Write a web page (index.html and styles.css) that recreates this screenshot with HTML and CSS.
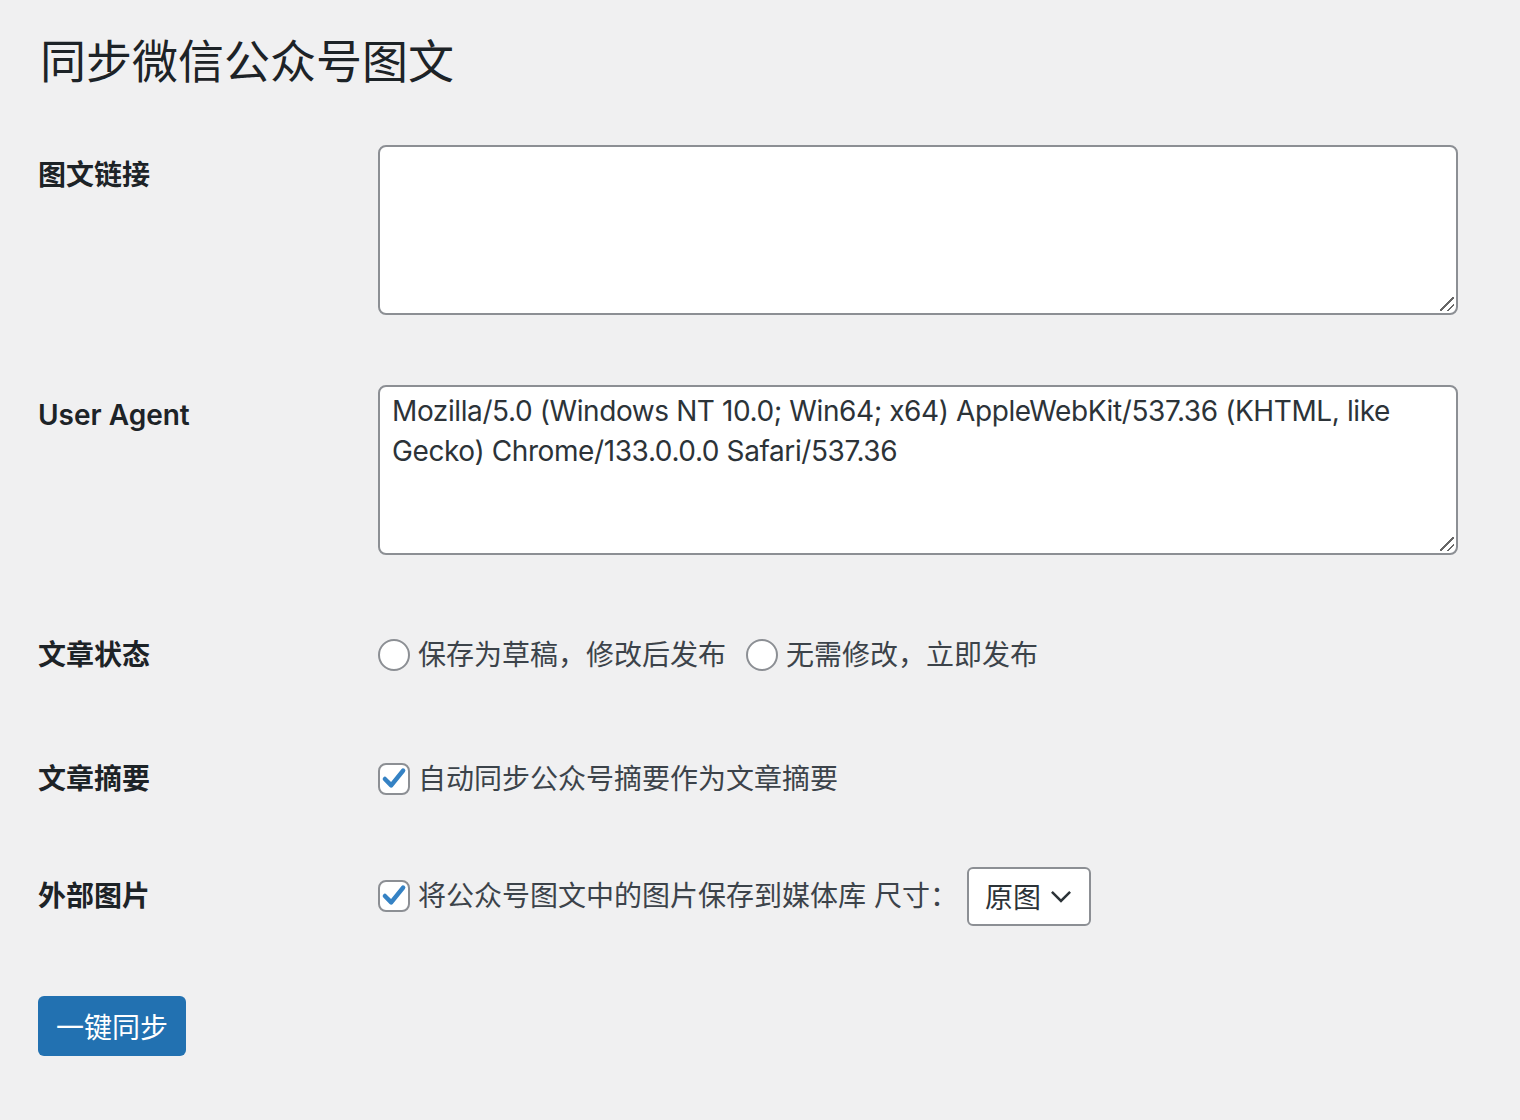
FILE: index.html
```html
<!DOCTYPE html>
<html lang="zh-CN">
<head>
    <meta charset="UTF-8">
    <meta name="viewport" content="width=device-width, initial-scale=1.0">
    <title>同步微信公众号图文</title>
    <link rel="stylesheet" href="styles.css">
</head>
<body>
    <div class="wrap">
        <h1>同步微信公众号图文</h1>

        <form class="sync-form">
            <div class="form-row">
                <div class="form-label">图文链接</div>
                <div class="form-field">
                    <div class="textarea-box">
                        <textarea class="large-text" rows="4"></textarea>
                    </div>
                </div>
            </div>

            <div class="form-row">
                <div class="form-label">User Agent</div>
                <div class="form-field">
                    <div class="textarea-box">
                        <textarea class="large-text" rows="4">Mozilla/5.0 (Windows NT 10.0; Win64; x64) AppleWebKit/537.36 (KHTML, like Gecko) Chrome/133.0.0.0 Safari/537.36</textarea>
                    </div>
                </div>
            </div>

            <div class="form-row row-status">
                <div class="form-label">文章状态</div>
                <div class="form-field inline-field">
                    <label class="choice"><span class="radio"></span>保存为草稿，修改后发布</label>
                    <label class="choice"><span class="radio"></span>无需修改，立即发布</label>
                </div>
            </div>

            <div class="form-row row-check">
                <div class="form-label">文章摘要</div>
                <div class="form-field inline-field">
                    <label class="choice">
                        <span class="checkbox">
                            <svg viewBox="0 0 20 20" width="30" height="30"><path d="M3.5 10 L8 14.5 L16.5 4" fill="none" stroke="#3582c4" stroke-width="3.2" stroke-linecap="round" stroke-linejoin="round"/></svg>
                        </span>自动同步公众号摘要作为文章摘要
                    </label>
                </div>
            </div>

            <div class="form-row row-image">
                <div class="form-label">外部图片</div>
                <div class="form-field inline-field">
                    <label class="choice">
                        <span class="checkbox">
                            <svg viewBox="0 0 20 20" width="30" height="30"><path d="M3.5 10 L8 14.5 L16.5 4" fill="none" stroke="#3582c4" stroke-width="3.2" stroke-linecap="round" stroke-linejoin="round"/></svg>
                        </span>将公众号图文中的图片保存到媒体库 尺寸：
                    </label>
                    <div class="select-box">
                        原图
                        <svg viewBox="0 0 20 20" width="28" height="28"><path d="M3.5 7 L10 13.5 L16.5 7" fill="none" stroke="#2c3338" stroke-width="1.8"/></svg>
                    </div>
                </div>
            </div>

            <div class="submit">
                <button type="button" class="button-primary">一键同步</button>
            </div>
        </form>
    </div>
</body>
</html>
```

FILE: styles.css
```css
body {
    font-family: Inter, "Noto Sans CJK SC", sans-serif;
    background-color: #F0F0F1;
    color: #1D2327;
    margin: 0;
    padding: 0;
}

.wrap {
    padding: 30px 40px 0 38px;
}

h1 {
    font-size: 46px;
    font-weight: 400;
    line-height: 62px;
    margin: 0 0 0 2px;
    padding: 0;
}

/* Form rows */
.sync-form {
    margin-top: 23px;
}

.form-row {
    display: grid;
    grid-template-columns: 340px 1fr;
}

.form-label {
    font-size: 28px;
    font-weight: 600;
    line-height: 40px;
    padding-top: 40px;
}

.form-field {
    padding: 30px 0;
    font-size: 28px;
    color: #3C434A;
}

.textarea-box {
    position: relative;
    width: 1080px;
    margin-bottom: 10px;
}

.large-text {
    display: block;
    box-sizing: border-box;
    width: 100%;
    height: 170px;
    padding: 4px 12px;
    border: 2px solid #8C8F94;
    border-radius: 8px;
    background-color: white;
    font-family: Inter, "Noto Sans CJK SC", sans-serif;
    font-size: 28px;
    line-height: 40px;
    color: #2C3338;
    letter-spacing: -0.4px;
    resize: none;
    outline: none;
}

/* resize grip drawn at 2x */
.textarea-box::after {
    content: "";
    position: absolute;
    right: 4px;
    bottom: 4px;
    width: 14px;
    height: 14px;
    background: linear-gradient(135deg, transparent 46%, #666 46%, #666 54%, transparent 54%, transparent 72%, #666 72%, #666 82%, transparent 82%);
}

.inline-field {
    display: flex;
    align-items: center;
}

.row-status .form-field {
    padding-top: 28px;
    min-height: 63px;
    box-sizing: content-box;
}

.row-check .form-label {
    padding-top: 43px;
}

.row-check .form-field {
    padding-top: 34px;
    padding-bottom: 28px;
    min-height: 58px;
    box-sizing: content-box;
}

.row-image .form-field {
    min-height: 60px;
    box-sizing: content-box;
}

.choice {
    display: flex;
    align-items: center;
    margin-right: 20px;
    line-height: 40px;
}

.radio {
    display: inline-block;
    box-sizing: border-box;
    width: 32px;
    height: 32px;
    border: 2px solid #8C8F94;
    border-radius: 50%;
    background-color: white;
    margin-right: 8px;
}

.checkbox {
    display: inline-flex;
    align-items: center;
    justify-content: center;
    box-sizing: border-box;
    width: 32px;
    height: 32px;
    border: 2px solid #8C8F94;
    border-radius: 8px;
    background-color: white;
    margin-right: 8px;
}

.row-image .choice {
    margin-right: 9px;
}

.select-box {
    display: flex;
    align-items: center;
    box-sizing: border-box;
    height: 59px;
    width: 124px;
    padding: 0 14px 0 16px;
    border: 2px solid #8C8F94;
    border-radius: 6px;
    background-color: white;
    color: #2C3338;
    font-size: 28px;
    justify-content: space-between;
}

.submit {
    margin-top: 40px;
}

.button-primary {
    background-color: #2271B1;
    color: white;
    border: none;
    border-radius: 6px;
    width: 148px;
    height: 60px;
    padding: 0;
    font-family: Inter, "Noto Sans CJK SC", sans-serif;
    font-size: 28px;
    cursor: pointer;
}
```
